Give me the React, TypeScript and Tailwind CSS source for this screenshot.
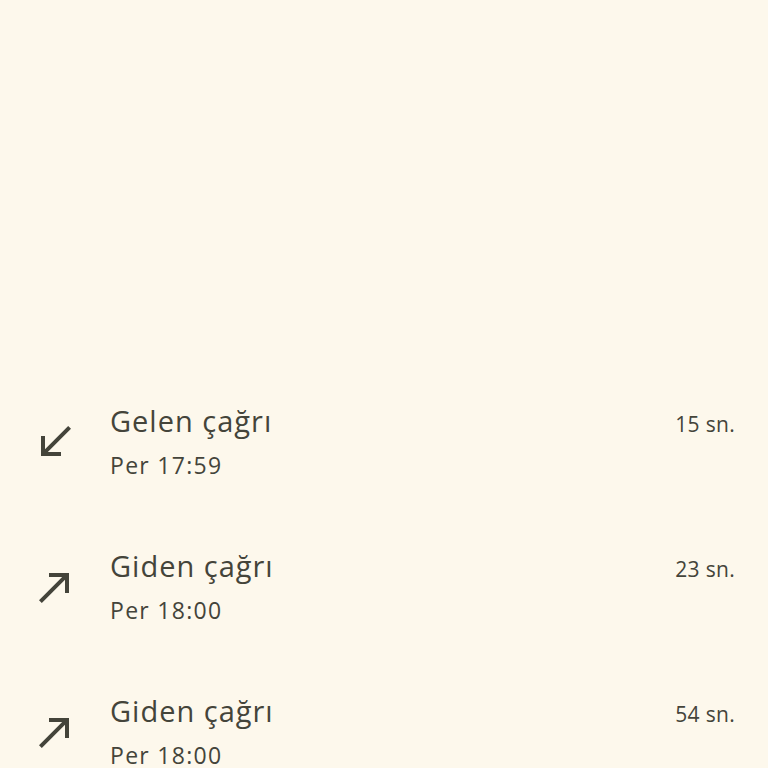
const calls = [
  { type: "in", title: "Gelen çağrı", time: "Per 17:59", duration: "15 sn." },
  { type: "out", title: "Giden çağrı", time: "Per 18:00", duration: "23 sn." },
  { type: "out", title: "Giden çağrı", time: "Per 18:00", duration: "54 sn." },
];

const CallIcon = ({ type }: { type: string }) => (
  <svg viewBox="0 0 24 24" className="w-[48px] h-[48px] shrink-0 mb-[6px]" fill="#44443a">
    {type === "in" ? (
      <path d="M20 5.41L18.59 4 7 15.59V9H5v10h10v-2H8.41z" />
    ) : (
      <path d="M9 5v2h6.59L4 18.59 5.41 20 17 8.41V15h2V5z" />
    )}
  </svg>
);

export default function App() {
  return (
    <div
      className="h-[768px] w-[768px] overflow-hidden bg-[#fdf8ec] text-[#44443a] pt-[372px]"
      style={{ fontFamily: "'Open Sans', Roboto, sans-serif" }}
    >
      {calls.map((c, i) => (
        <div key={i} className="h-[145px] flex items-center pl-[31px] pr-[33px]">
          <CallIcon type={c.type} />
          <div className="flex-1 ml-[31px]">
            <div className="flex items-center justify-between leading-[40px] -mt-[3px]">
              <span className="text-[29px] tracking-[1px]">{c.title}</span>
              <span className="text-[21px] tracking-[0.3px] translate-y-[3px]">{c.duration}</span>
            </div>
            <div className="text-[23px] tracking-[1.3px] leading-[40px] mt-[4px]">{c.time}</div>
          </div>
        </div>
      ))}
    </div>
  );
}
